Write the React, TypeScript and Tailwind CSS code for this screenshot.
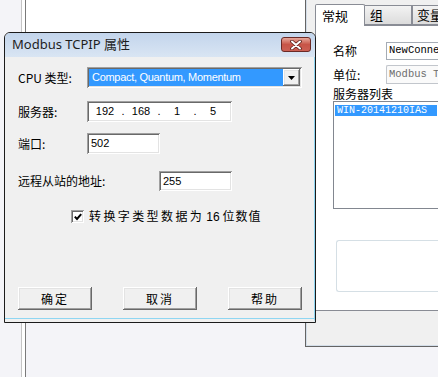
import React from "react";

const ui = { fontFamily: '"Liberation Sans","Noto Sans CJK SC",sans-serif' };
const cjk = { fontFamily: '"Noto Sans CJK SC","Liberation Sans",sans-serif' };
const mono = { fontFamily: '"Liberation Mono","Noto Sans CJK SC",monospace' };

const sunken =
  "bg-white shadow-[inset_1px_1px_0_#a0a0a0,inset_-1px_-1px_0_#ffffff,inset_2px_2px_0_#696969,inset_-2px_-2px_0_#e3e3e3]";
const raised =
  "bg-[#f0f0f0] shadow-[inset_-1px_-1px_0_#696969,inset_1px_1px_0_#ffffff,inset_-2px_-2px_0_#a0a0a0,inset_2px_2px_0_#e3e3e3]";

const Label = ({ children, w = 69 }: { children: React.ReactNode; w?: number }) => (
  <div className="shrink-0 text-[12px] text-black leading-none" style={{ ...cjk, width: w }}>
    {children}
  </div>
);

const ClassicButton = ({ label }: { label: string }) => (
  <div
    className={`${raised} w-[74px] h-[23px] flex items-center justify-center text-[12px] tracking-[2px] text-black`}
    style={cjk}
  >
    {label}
  </div>
);

const IpField = () => {
  const parts = ["192", "168", "1", "5"];
  return (
    <div className={`${sunken} w-[145px] h-[21px] flex items-center px-[3px] text-[11px]`} style={ui}>
      {parts.map((p, i) => (
        <React.Fragment key={i}>
          <span className="w-[30px] text-center">{p}</span>
          {i < 3 && <span className="w-[6px] text-center">.</span>}
        </React.Fragment>
      ))}
    </div>
  );
};

const Dialog = () => (
  <div className="absolute left-[4px] top-[32px] w-[312px] h-[291px] rounded-t-[6px] border border-[#1b1b1b] bg-[#f0f0f0] flex flex-col overflow-hidden">
    {/* title bar */}
    <div className="relative h-[24px] shrink-0 bg-gradient-to-b from-[#c3d5ec] to-[#d9e5f3] flex items-center pl-[7px]">
      <span className="text-[13px] text-[#1e1e1e]" style={{ fontFamily: '"Noto Sans","Noto Sans CJK SC",sans-serif' }}>
        Modbus TCPIP 属性
      </span>
      <div className="absolute right-[4px] top-[4px] w-[30px] h-[15px] rounded-[3px] border border-[#6b2a26] bg-gradient-to-b from-[#e6a89c] via-[#c75447] to-[#cc6054] flex items-center justify-center">
        <svg width="12" height="10" viewBox="0 0 12 10">
          <path d="M2 1.5 L10 8.5 M10 1.5 L2 8.5" stroke="#5a1f1a" strokeWidth="3.6" strokeLinecap="round" />
          <path d="M2 1.5 L10 8.5 M10 1.5 L2 8.5" stroke="#ffffff" strokeWidth="2" strokeLinecap="round" />
        </svg>
      </div>
    </div>

    {/* client */}
    <div className="flex-1 flex flex-col pl-[13px] pt-[10px] border-r border-b-[3px] border-[#8fd6f2] border-b-[#f0f0f0] shadow-[inset_0_-1px_0_#8fd6f2]">
      <div className="flex items-center h-[21px]">
        <Label>CPU 类型:</Label>
        <div className={`${sunken} w-[215px] h-[21px] flex items-center p-[2px]`}>
          <div className="flex-1 h-full bg-[#3399ff] text-white text-[11px] tracking-[-0.3px] flex items-center pl-[3px]" style={ui}>
            Compact, Quantum, Momentum
          </div>
          <div className={`${raised} w-[17px] h-full flex items-center justify-center`}>
            <svg width="7" height="4" viewBox="0 0 7 4">
              <path d="M0 0 H7 L3.5 4 Z" fill="#000" />
            </svg>
          </div>
        </div>
      </div>

      <div className="flex items-center h-[21px] mt-[13px]">
        <Label>服务器:</Label>
        <IpField />
      </div>

      <div className="flex items-center h-[21px] mt-[11px]">
        <Label>端口:</Label>
        <div className={`${sunken} w-[73px] h-[21px] flex items-center pl-[4px] text-[11px]`} style={ui}>
          502
        </div>
      </div>

      <div className="flex items-center h-[20px] mt-[17px]">
        <Label w={141}>远程从站的地址:</Label>
        <div className={`${sunken} w-[73px] h-[20px] flex items-center pl-[4px] text-[11px]`} style={ui}>
          255
        </div>
      </div>

      <div className="flex items-center h-[13px] mt-[19px] pl-[53px]">
        <div className={`${sunken} w-[13px] h-[13px] flex items-center justify-center`}>
          <svg width="8" height="8" viewBox="0 0 8 8">
            <path d="M0.8 3.6 L3 6 L7.2 1.2" stroke="#000" strokeWidth="2" fill="none" />
          </svg>
        </div>
        <span className="ml-[5px] text-[12px] text-black leading-none whitespace-nowrap" style={cjk}>
          <span className="tracking-[2.4px]">转换字类型数据为</span>
          <span className="ml-[2px]" style={ui}>16</span>
          <span className="ml-[3px] tracking-[1px]">位数值</span>
        </span>
      </div>

      <div className="flex mt-[64px] gap-[31px]">
        <ClassicButton label="确定" />
        <ClassicButton label="取消" />
        <ClassicButton label="帮助" />
      </div>
    </div>
  </div>
);

const RightWindow = () => (
  <div className="absolute left-[305px] top-0 right-0 h-[347px] border-l border-b border-[#646464] bg-[#f0f0f0]">
    <div className="h-full border-l border-b border-[#d3dde8] flex flex-col pl-[8px] pt-[3px] pb-[2px]">
      {/* tabs */}
      <div className="flex items-end h-[22px] shrink-0 text-[13px] text-black" style={cjk}>
        <div className="relative z-10 w-[50px] h-[22px] -mb-px bg-white border border-b-0 border-[#898c95] rounded-t-[2px] pl-[6px] flex items-center">
          常规
        </div>
        <div className="w-[47px] h-[20px] bg-gradient-to-b from-[#f3f3f3] to-[#dcdcdc] border border-l-0 border-[#898c95] pl-[5px] flex items-center">
          组
        </div>
        <div className="flex-1 h-[20px] bg-gradient-to-b from-[#f3f3f3] to-[#dcdcdc] border border-r-0 border-[#898c95] pl-[4px] flex items-center whitespace-nowrap overflow-hidden">
          变量
        </div>
      </div>
      {/* panel */}
      <div className="h-[286px] shrink-0 bg-white border border-r-0 border-[#898c95] pl-[17px] pt-[16px] flex flex-col">
        <div className="flex items-center h-[18px]">
          <span className="w-[53px] text-[12px]" style={cjk}>名称</span>
          <div className="flex-1 h-[18px] border border-r-0 border-[#a5acb5] flex items-center pl-[2px] text-[10.5px] text-black whitespace-nowrap overflow-hidden" style={mono}>
            NewConne
          </div>
        </div>
        <div className="flex items-center h-[19px] mt-[5px]">
          <span className="w-[53px] text-[12px]" style={cjk}>单位:</span>
          <div className="flex-1 h-[19px] border border-r-0 border-[#c2c6cc] rounded-tl-[2px] bg-[#fafafa] flex items-center pl-[2px] text-[10.5px] text-[#6d6d6d] whitespace-nowrap overflow-hidden" style={mono}>
            Modbus T
          </div>
        </div>
        <div className="text-[12px] leading-none mt-[4px] h-[13px]" style={cjk}>服务器列表</div>
        <div className="h-[108px] border border-r-0 border-[#828790] p-[1px] pt-[3px]">
          <div className="h-[11px] bg-[#3399ff] text-white text-[10px] leading-[11px] pl-[2px] whitespace-nowrap" style={mono}>
            WIN-20141210IAS
          </div>
        </div>
        <div className="ml-[3px] mt-[31px] h-[52px] border border-r-0 border-[#d5dfe5] rounded-l-[3px]" />
      </div>
    </div>
  </div>
);

export default function App() {
  return (
    <div className="relative w-[438px] h-[377px] overflow-hidden bg-[#f4f4f8]">
      {/* background editor area */}
      <div className="absolute left-[21px] top-0 bottom-0 w-px bg-[#c4c4c4]" />
      <div className="absolute left-[22px] top-0 bottom-0 w-[3px] bg-white" />
      <div className="absolute left-[25px] top-0 bottom-0 w-px bg-[#7a7a7a]" />
      <div className="absolute left-[26px] top-0 w-[279px] h-[300px] bg-white" />
      <RightWindow />
      <Dialog />
    </div>
  );
}
